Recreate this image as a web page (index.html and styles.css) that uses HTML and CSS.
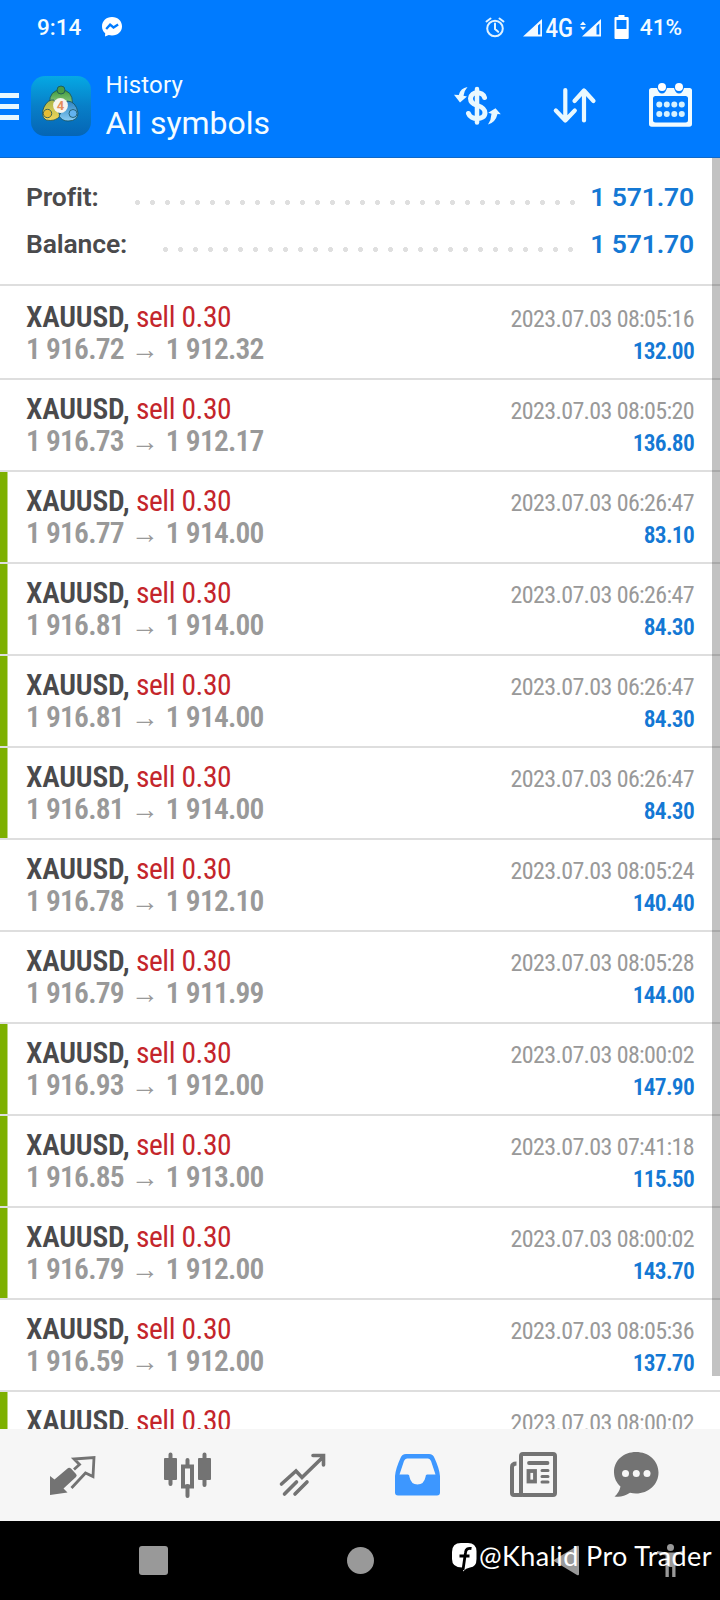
FILE: index.html
```html
<!DOCTYPE html>
<html lang="en">
<head>
<meta charset="utf-8">
<title>History</title>
<link rel="stylesheet" href="styles.css">
</head>
<body>
<div class="screen">
  <header class="header">
    <div class="status">
      <span class="clock">9:14</span>
      <svg class="messenger" width="22" height="22" viewBox="0 0 22 22"><path fill="#fff" d="M11 1C5 1 1 5.200 1 10.400c0 2.800 1.200 5.200 3.200 6.900L4 20.500l3.700-1.400c1 .3 2.100.5 3.300.5 6 0 10-4.100 10-9.300S17 1 11 1z"/><path d="M5.200 13l3.900-4.300 3.400 2.800 4.600-3" fill="none" stroke="#007bff" stroke-width="2.300"/></svg>
      <svg class="indicators" width="150" height="36" viewBox="482 8 150 36">
        <g fill="none" stroke="#e0f2ff" stroke-width="2" stroke-linecap="round"><circle cx="495" cy="27.500" r="7.800"/><path d="M495 22.500v5.500l3.200 2.800M486.500 20.500l4-3M503.500 20.500l-4-3"/></g>
        <path fill="#f4faff" fill-rule="evenodd" d="M523 35.500L542 18v17.500zM538 24.500V33.500h2.300V22.500z"/>
        <text class="net" x="545.500" y="35.800" textLength="27.500" lengthAdjust="spacingAndGlyphs">4G</text>
        <path fill="#f4faff" fill-rule="evenodd" d="M582 35.500L601 18v17.500zM596.500 25V33.500h2.800V22.500zM580 24l3-3.500 3 3.500zM580 25.800h6l-3 3.400z"/>
        <path fill="#fff" fill-rule="evenodd" d="M618.500 14h6v2h3.200q1 0 1 1V37q0 1-1 1H615.500q-1 0-1-1V17q0-1 1-1h3zM616.500 19v9h10v-9z"/>
      </svg>
      <span class="battery">41%</span>
    </div>
    <div class="appbar">
      <div class="menu"><i></i><i></i><i></i></div>
      <svg class="logo" width="60" height="60" viewBox="0 0 60 60">
        <defs>
          <linearGradient id="sky" x1="0" y1="0" x2="0" y2="1"><stop offset="0" stop-color="#05a9e4"/><stop offset=".5" stop-color="#087fc8"/><stop offset="1" stop-color="#0565b5"/></linearGradient>
          <linearGradient id="leaf" x1="0" y1="0" x2="0" y2="1"><stop offset="0" stop-color="#3f9a3c"/><stop offset="1" stop-color="#a5d796"/></linearGradient>
          <linearGradient id="gold" x1="0" y1="0" x2="0" y2="1"><stop offset="0" stop-color="#a9b548"/><stop offset="1" stop-color="#f1d65c"/></linearGradient>
          <linearGradient id="aqua" x1="0" y1="0" x2="0" y2="1"><stop offset="0" stop-color="#2b84c4"/><stop offset="1" stop-color="#8accf2"/></linearGradient>
        </defs>
        <rect width="60" height="60" rx="14" fill="url(#sky)"/>
        <g stroke="#164f5c" stroke-width=".8">
          <path fill="url(#leaf)" d="M18.500 27q0-13 11.500-13t11.500 13l-5 5H24z"/>
          <path fill="url(#gold)" d="M13 31q4-8 10-7l6 16q-5 6-14 4-6-4-2-13z"/>
          <path fill="url(#aqua)" d="M36 25q9 0 11 12 0 8-10 8-6 0-9-5z"/>
          <circle cx="30" cy="14" r="4" fill="#4b9c45"/><circle cx="16.500" cy="37.500" r="4.200" fill="#e5bc34"/><circle cx="42" cy="37.500" r="4" fill="#62b2ef"/>
        </g>
        <circle cx="29.500" cy="29.500" r="7.400" fill="#f6f4ee"/>
        <text class="four" x="29.500" y="34.300" text-anchor="middle">4</text>
      </svg>
      <div class="titles"><div class="sub">History</div><div class="main">All symbols</div></div>
      <svg class="actions" width="240" height="48" viewBox="454 80 240 48">
        <g fill="none" stroke="#e8f8ff" stroke-linecap="round">
          <path stroke-width="4.500" d="M477 89V122.500"/>
          <path stroke-width="5" d="M484.500 97.500C483 91.500 471 90.500 470.500 98.500C470.500 103 474 104.500 477.500 105.500C482 107 485 108.500 485 113C484.500 120.500 470.500 120 468.500 113.500"/>
        </g>
        <path fill="#e8f8ff" d="M467.500 87q-7 1-8.700 8l-4.800-.2 6 7.700 7-6-3.500-.7q.5-5 4-8.800zM488 124.500q7.500-2 9.500-10.500l3.300.3-5.300-6-7.300 4.500 3.300 1q-.3 6.200-3.500 10.700z"/>
        <g fill="none" stroke="#e8f8ff" stroke-width="4.200" stroke-linecap="round" stroke-linejoin="round"><path d="M565.300 90v30M555.800 110.500l9.500 10 9.500-10M584 120.500V91M574.500 101l9.500-10.500 9.500 10.500"/></g>
        <path fill="#f1fbff" fill-rule="evenodd" d="M651.500 88H657q1.500 5.500 5 5.500t5-5.500h7q1.500 5.500 5 5.500t5-5.500h5.500q2.500 0 2.500 2.500V124q0 2.800-2.800 2.800H651.800q-2.800 0-2.800-2.800V90.500q0-2.500 2.500-2.500zM655.500 96q-2.500 0-2.500 2.500V120q0 2.500 2.500 2.500h30q2.500 0 2.500-2.500V98.500q0-2.500-2.500-2.500z"/>
        <g fill="#fff"><circle cx="662" cy="87" r="4"/><circle cx="679" cy="87" r="4"/></g>
        <path stroke="#d5f1ff" stroke-width="6" stroke-linecap="round" stroke-dasharray="0 7.500" d="M659.300 104.500H682.500M659.300 114H682.500"/>
      </svg>
    </div>
  </header>

  <main class="content">
    <section class="summary">
      <div class="sum"><b>Profit:</b><span class="dots profit"></span><b class="num">1 571.70</b></div>
      <div class="sum"><b>Balance:</b><span class="dots balance"></span><b class="num">1 571.70</b></div>
    </section>
    <section class="deals">
      <div class="deal"><div class="l"><b>XAUUSD,</b> <em>sell 0.30</em><p>1 916.72<i>→</i>1 912.32</p></div><div class="r">2023.07.03 08:05:16<p>132.00</p></div></div>
      <div class="deal"><div class="l"><b>XAUUSD,</b> <em>sell 0.30</em><p>1 916.73<i>→</i>1 912.17</p></div><div class="r">2023.07.03 08:05:20<p>136.80</p></div></div>
      <div class="deal tp"><div class="l"><b>XAUUSD,</b> <em>sell 0.30</em><p>1 916.77<i>→</i>1 914.00</p></div><div class="r">2023.07.03 06:26:47<p>83.10</p></div></div>
      <div class="deal tp"><div class="l"><b>XAUUSD,</b> <em>sell 0.30</em><p>1 916.81<i>→</i>1 914.00</p></div><div class="r">2023.07.03 06:26:47<p>84.30</p></div></div>
      <div class="deal tp"><div class="l"><b>XAUUSD,</b> <em>sell 0.30</em><p>1 916.81<i>→</i>1 914.00</p></div><div class="r">2023.07.03 06:26:47<p>84.30</p></div></div>
      <div class="deal tp"><div class="l"><b>XAUUSD,</b> <em>sell 0.30</em><p>1 916.81<i>→</i>1 914.00</p></div><div class="r">2023.07.03 06:26:47<p>84.30</p></div></div>
      <div class="deal"><div class="l"><b>XAUUSD,</b> <em>sell 0.30</em><p>1 916.78<i>→</i>1 912.10</p></div><div class="r">2023.07.03 08:05:24<p>140.40</p></div></div>
      <div class="deal"><div class="l"><b>XAUUSD,</b> <em>sell 0.30</em><p>1 916.79<i>→</i>1 911.99</p></div><div class="r">2023.07.03 08:05:28<p>144.00</p></div></div>
      <div class="deal tp"><div class="l"><b>XAUUSD,</b> <em>sell 0.30</em><p>1 916.93<i>→</i>1 912.00</p></div><div class="r">2023.07.03 08:00:02<p>147.90</p></div></div>
      <div class="deal tp"><div class="l"><b>XAUUSD,</b> <em>sell 0.30</em><p>1 916.85<i>→</i>1 913.00</p></div><div class="r">2023.07.03 07:41:18<p>115.50</p></div></div>
      <div class="deal tp"><div class="l"><b>XAUUSD,</b> <em>sell 0.30</em><p>1 916.79<i>→</i>1 912.00</p></div><div class="r">2023.07.03 08:00:02<p>143.70</p></div></div>
      <div class="deal"><div class="l"><b>XAUUSD,</b> <em>sell 0.30</em><p>1 916.59<i>→</i>1 912.00</p></div><div class="r">2023.07.03 08:05:36<p>137.70</p></div></div>
      <div class="deal tp"><div class="l"><b>XAUUSD,</b> <em>sell 0.30</em></div><div class="r">2023.07.03 08:00:02</div></div>
    </section>
    <div class="scroll"></div>
  </main>

  <nav class="tabs">
    <svg width="48" height="48" viewBox="0 0 48 48"><path fill="#737373" d="M19.500 17.500Q21 16 23 17.500L28 23q1.500 1.500 0 3L15.500 37.500 19.500 41.500 2 44V25l4.500 3.500z"/><path fill="none" stroke="#737373" stroke-width="2.800" d="M23.500 37L37.500 22l7.500 3.500L46 6.500 26 8l5.500 5.500-5.500 5"/></svg>
    <svg width="48" height="48" viewBox="0 0 48 48"><path fill="none" stroke="#737373" stroke-width="4" stroke-linecap="round" d="M7.500 3.500V33M24.500 9V14M24.500 35V45M41.500 3.500V34"/><path fill="#737373" d="M1 8q0-1 1-1h11q1 0 1 1v20q0 1-1 1H2q-1 0-1-1zM35 8q0-1 1-1h11q1 0 1 1v20q0 1-1 1H36q-1 0-1-1z"/><rect x="20" y="15.500" width="9" height="20" fill="none" stroke="#737373" stroke-width="4"/></svg>
    <svg width="48" height="48" viewBox="0 0 48 48"><path fill="none" stroke="#737373" stroke-width="3.600" stroke-linecap="round" d="M3.500 33L18 20l6 6.500L44 7M35 4.500h10.500V14M6.500 43l12-12M17 43l12-12"/></svg>
    <svg width="48" height="48" viewBox="0 0 48 48"><path fill="#3d97ff" fill-rule="evenodd" d="M13 3H36q4 0 5.500 4Q46.500 18 47 25V41.500q0 3-3 3H5q-3 0-3-3V25Q2.500 18 7.500 7 9 3 13 3zM14 7.500q-2 0-3 2.500L6.500 23.500H15q1.500 0 1.500 2.500 1.500 7.500 8 7.500t8-7.500q0-2.500 1.500-2.500H42.500L38 10q-1-2.500-3-2.500z"/></svg>
    <svg width="48" height="48" viewBox="0 0 48 48"><g fill="none" stroke="#737373" stroke-width="4"><rect x="12" y="3" width="34" height="41" rx="2"/><path d="M7.500 12.500Q3 12.500 3 16v26q0 2 2 2h8"/><path d="M20 12h18.500" stroke-width="3.800" stroke-linecap="round"/><rect x="19.500" y="20" width="6.500" height="10.500" stroke-width="3.800"/><path d="M33 19.500h6M33 25.500h6M33 31h6" stroke-width="3" stroke-linecap="round"/></g></svg>
    <svg width="48" height="48" viewBox="0 0 48 48"><path fill="#737373" d="M25 1C12.500 1 3 9.500 3 21c0 6.500 2.800 11 6.500 14.500Q8 42 3.500 45.500 11 47 19 41.800q3 .7 6 .7c12.500 0 22.500-9 22.500-21S37.500 1 25 1z"/><g fill="#f6f6f6"><circle cx="14.500" cy="22.500" r="3.500"/><circle cx="25.300" cy="22.500" r="3.500"/><circle cx="36" cy="22.500" r="3.500"/></g></svg>
  </nav>

  <footer class="sysnav">
    <svg width="720" height="79" viewBox="0 1521 720 79">
      <g fill="#999"><rect x="139" y="1546" width="29" height="29" rx="3"/><circle cx="360.500" cy="1560.500" r="13.500"/><path d="M553 1560.500L577 1546q2-1 2 1v27q0 2-2 1z"/>
      <circle cx="670.500" cy="1547.500" r="3.500"/><path d="M657 1551l9 1.500h9L684 1551v2.500l-8.500 2V1577h-3.300v-10h-3.400v10H665.500v-21.500l-8.500-2z"/></g>
    </svg>
    <div class="credit">
      <svg width="25" height="29" viewBox="0 0 25 29"><path fill="#fff" d="M9 0h7q8 0 8.500 8v8q0 8-6.500 8.500-4 .5-7 4l.3-4Q0 25 0 16V9Q0 0 9 0z"/><path fill="none" stroke="#000" stroke-width="2.800" d="M19.500 5.500q-5.500-1-6 4L11 27M7.500 13h10"/></svg>
      <span>@Khalid Pro Trader</span>
    </div>
  </footer>
</div>
</body>
</html>
```
FILE: styles.css
```css
* { box-sizing: border-box; }
body { margin: 0; background: #fff; font-family: Roboto, "Liberation Sans", sans-serif; }
p { margin: 0; }
svg { display: block; flex: none; }
.screen { width: 720px; height: 1600px; display: flex; flex-direction: column; overflow: hidden; }

.header { height: 158px; flex: none; background: #007bff; border-bottom: 1px solid #1069c8; color: #f4fcff; }
.status { height: 54px; display: flex; align-items: center; padding: 0 38px 0 37px; font-size: 22.5px; font-weight: 500; white-space: nowrap; }
.messenger { margin-left: 20px; }
.indicators { margin-left: auto; margin-right: 8px; }
.net { font-size: 26px; font-weight: 500; fill: #f4faff; }

.appbar { height: 103px; display: flex; align-items: flex-start; padding-top: 22px; }
.menu { width: 19px; margin: 17px 11.5px 0 0; display: flex; flex-direction: column; gap: 6px; }
.menu i { height: 5px; background: #e8f8ff; }
.logo { margin: -.5px 0 0; }
.titles { margin: -5px 0 0 15px; white-space: nowrap; }
.sub { font-size: 24px; line-height: 28px; letter-spacing: .15px; }
.main { font-size: 32px; line-height: 38px; margin-top: 5px; }
.four { font-size: 13px; font-weight: 700; fill: #e58e5b; }
.actions { margin: 4px 26px 0 auto; }

.content { flex: 1; min-height: 0; position: relative; overflow: hidden; }
.summary { height: 130px; padding: 15px 26px 0 26px; color: #4a4a4c; background: linear-gradient(#dedede, #dedede) 0 126px / 100% 2px no-repeat; }
.sum { height: 47px; display: flex; line-height: 47px; font-size: 26.5px; }
.sum b { font-weight: 600; letter-spacing: -.15px; }
.sum .num { color: #1478d4; }
.dots { height: 5px; margin: 27px 0 0 auto; background: radial-gradient(circle at center, #dfdfdf 2.2px, transparent 2.8px) 0 0 / 15px 5px; }
.profit { width: 450px; margin-right: 10px; }
.balance { width: 420px; margin-right: 12px; }

.deal { height: 92px; border-bottom: 2px solid #dedede; display: flex; justify-content: space-between; padding: 13px 26px 0 26px; font-stretch: 75%; white-space: nowrap; }
.tp { background: linear-gradient(#7db000, #7db000) 0 0 / 7.5px 90px no-repeat; }
.l { font-size: 29.5px; line-height: 32px; color: #4a4a4c; letter-spacing: -.42px; }
.l b { font-weight: 600; letter-spacing: -.2px; }
.l em { font-style: normal; color: #c4252b; }
.l p { font-weight: 600; color: #999; letter-spacing: -.8px; }
.l i { display: inline-block; width: 42px; text-align: center; font: 400 28px/20px Roboto, sans-serif; letter-spacing: 0; }
.r { padding-top: 2px; font-size: 24px; line-height: 32px; color: #999; text-align: right; letter-spacing: -.62px; }
.r p { font-size: 23.5px; font-weight: 600; color: #1478d4; letter-spacing: -.75px; }
.scroll { position: absolute; right: 0; top: 0; width: 8px; height: 1218px; background: rgba(0, 0, 0, .24); }

.tabs { height: 92px; flex: none; background: #f6f6f6; display: flex; align-items: flex-start; gap: 67.3px; padding: 22px 0 0 47.5px; }
.tabs svg:last-child { margin-left: -12.5px; }
.sysnav { height: 79px; flex: none; background: #000; position: relative; }
.credit { position: absolute; left: 451.5px; top: 22px; display: flex; gap: 2.5px; color: #fff; font: 400 27px/26px Lato, sans-serif; white-space: nowrap; }
.credit span { letter-spacing: .4px; }
```
